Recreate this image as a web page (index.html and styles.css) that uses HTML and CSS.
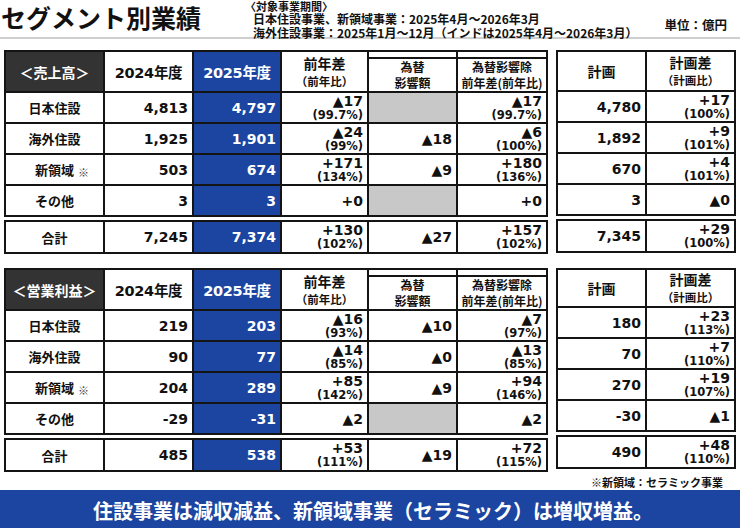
FILE: index.html
```html
<!DOCTYPE html>
<html lang="ja">
<head>
<meta charset="utf-8">
<title>セグメント別業績</title>
<link rel="stylesheet" href="styles.css">
</head>
<body>
<div class="page">
  <header class="top">
    <h1 class="title">セグメント別業績</h1>
    <div class="period">
      <div class="period-head">〈対象事業期間〉</div>
      <div class="period-line">日本住設事業、新領域事業：2025年4月～2026年3月</div>
      <div class="period-line">海外住設事業：2025年1月～12月（インドは2025年4月～2026年3月）</div>
    </div>
    <div class="unit">単位：億円</div>
  </header>

  <section class="block first">
    <div class="main">
      <table class="t">
        <colgroup><col class="c-lbl"><col class="c-89"><col class="c-88"><col class="c-87"><col class="c-89"><col class="c-90"></colgroup>
        <thead>
          <tr class="hrow">
            <th class="corner">＜売上高＞</th>
            <th class="yr">2024年度</th>
            <th class="yr cur">2025年度</th>
            <th class="hd"><span class="h1">前年差</span><span class="h2">（前年比）</span></th>
            <th class="hd fx"><span class="h3">為替</span><span class="h3">影響額</span></th>
            <th class="hd fx"><span class="h3">為替影響除</span><span class="h3">前年差(前年比)</span></th>
          </tr>
        </thead>
        <tbody>
          <tr><th class="lbl">日本住設</th><td>4,813</td><td class="cur">4,797</td><td><span class="v">▲17</span><span class="p">(99.7%)</span></td><td class="na"></td><td><span class="v">▲17</span><span class="p">(99.7%)</span></td></tr>
          <tr><th class="lbl">海外住設</th><td>1,925</td><td class="cur">1,901</td><td><span class="v">▲24</span><span class="p">(99%)</span></td><td>▲18</td><td><span class="v">▲6</span><span class="p">(100%)</span></td></tr>
          <tr><th class="lbl">新領域<span class="kome">※</span></th><td>503</td><td class="cur">674</td><td><span class="v">+171</span><span class="p">(134%)</span></td><td>▲9</td><td><span class="v">+180</span><span class="p">(136%)</span></td></tr>
          <tr><th class="lbl">その他</th><td>3</td><td class="cur">3</td><td>+0</td><td class="na"></td><td>+0</td></tr>
        </tbody>
      </table>
      <table class="t total">
        <colgroup><col class="c-lbl"><col class="c-89"><col class="c-88"><col class="c-87"><col class="c-89"><col class="c-90"></colgroup>
        <tbody>
          <tr><th class="lbl">合計</th><td>7,245</td><td class="cur">7,374</td><td><span class="v">+130</span><span class="p">(102%)</span></td><td>▲27</td><td><span class="v">+157</span><span class="p">(102%)</span></td></tr>
        </tbody>
      </table>
    </div>
    <div class="plan">
      <table class="t">
        <colgroup><col class="c-89"><col class="c-89"></colgroup>
        <thead>
          <tr class="hrow">
            <th class="hd"><span class="h1">計画</span></th>
            <th class="hd"><span class="h1">計画差</span><span class="h2">（計画比）</span></th>
          </tr>
        </thead>
        <tbody>
          <tr><td>4,780</td><td><span class="v">+17</span><span class="p">(100%)</span></td></tr>
          <tr><td>1,892</td><td><span class="v">+9</span><span class="p">(101%)</span></td></tr>
          <tr><td>670</td><td><span class="v">+4</span><span class="p">(101%)</span></td></tr>
          <tr><td>3</td><td>▲0</td></tr>
        </tbody>
      </table>
      <table class="t total">
        <colgroup><col class="c-89"><col class="c-89"></colgroup>
        <tbody>
          <tr><td>7,345</td><td><span class="v">+29</span><span class="p">(100%)</span></td></tr>
        </tbody>
      </table>
    </div>
  </section>

  <section class="block second">
    <div class="main">
      <table class="t">
        <colgroup><col class="c-lbl"><col class="c-89"><col class="c-88"><col class="c-87"><col class="c-89"><col class="c-90"></colgroup>
        <thead>
          <tr class="hrow">
            <th class="corner">＜営業利益＞</th>
            <th class="yr">2024年度</th>
            <th class="yr cur">2025年度</th>
            <th class="hd"><span class="h1">前年差</span><span class="h2">（前年比）</span></th>
            <th class="hd fx"><span class="h3">為替</span><span class="h3">影響額</span></th>
            <th class="hd fx"><span class="h3">為替影響除</span><span class="h3">前年差(前年比)</span></th>
          </tr>
        </thead>
        <tbody>
          <tr><th class="lbl">日本住設</th><td>219</td><td class="cur">203</td><td><span class="v">▲16</span><span class="p">(93%)</span></td><td>▲10</td><td><span class="v">▲7</span><span class="p">(97%)</span></td></tr>
          <tr><th class="lbl">海外住設</th><td>90</td><td class="cur">77</td><td><span class="v">▲14</span><span class="p">(85%)</span></td><td>▲0</td><td><span class="v">▲13</span><span class="p">(85%)</span></td></tr>
          <tr><th class="lbl">新領域<span class="kome">※</span></th><td>204</td><td class="cur">289</td><td><span class="v">+85</span><span class="p">(142%)</span></td><td>▲9</td><td><span class="v">+94</span><span class="p">(146%)</span></td></tr>
          <tr><th class="lbl">その他</th><td>-29</td><td class="cur">-31</td><td>▲2</td><td class="na"></td><td>▲2</td></tr>
        </tbody>
      </table>
      <table class="t total">
        <colgroup><col class="c-lbl"><col class="c-89"><col class="c-88"><col class="c-87"><col class="c-89"><col class="c-90"></colgroup>
        <tbody>
          <tr><th class="lbl">合計</th><td>485</td><td class="cur">538</td><td><span class="v">+53</span><span class="p">(111%)</span></td><td>▲19</td><td><span class="v">+72</span><span class="p">(115%)</span></td></tr>
        </tbody>
      </table>
    </div>
    <div class="plan">
      <table class="t">
        <colgroup><col class="c-89"><col class="c-89"></colgroup>
        <thead>
          <tr class="hrow">
            <th class="hd"><span class="h1">計画</span></th>
            <th class="hd"><span class="h1">計画差</span><span class="h2">（計画比）</span></th>
          </tr>
        </thead>
        <tbody>
          <tr><td>180</td><td><span class="v">+23</span><span class="p">(113%)</span></td></tr>
          <tr><td>70</td><td><span class="v">+7</span><span class="p">(110%)</span></td></tr>
          <tr><td>270</td><td><span class="v">+19</span><span class="p">(107%)</span></td></tr>
          <tr><td>-30</td><td>▲1</td></tr>
        </tbody>
      </table>
      <table class="t total">
        <colgroup><col class="c-89"><col class="c-89"></colgroup>
        <tbody>
          <tr><td>490</td><td><span class="v">+48</span><span class="p">(110%)</span></td></tr>
        </tbody>
      </table>
    </div>
  </section>

  <p class="note">※新領域：セラミック事業</p>
  <div class="banner">住設事業は減収減益、新領域事業（セラミック）は増収増益。</div>
</div>
</body>
</html>
```

FILE: styles.css
```css
* { box-sizing: border-box; }
html, body { margin: 0; padding: 0; background: #fff; }
body {
  width: 740px;
  height: 528px;
  overflow: hidden;
  font-family: "Noto Sans CJK JP", "Noto Sans", sans-serif;
  color: #111;
}
.page {
  display: flex;
  flex-direction: column;
  height: 528px;
}

/* ---------- top header ---------- */
.top {
  display: flex;
  align-items: flex-start;
  height: 39px;
  border-bottom: 2px solid #cfcfcf;
  padding-left: 1px;
}
.title {
  margin: 0;
  padding-top: 4px;
  font-size: 25px;
  line-height: 26px;
  font-weight: 700;
  color: #111;
  white-space: nowrap;
}
.period {
  margin-left: 44px;
  margin-top: 0;
  font-weight: 700;
  white-space: nowrap;
}
.period-head {
  font-size: 11px;
  line-height: 12px;
}
.period-line {
  font-size: 12px;
  line-height: 13.5px;
  padding-left: 8px;
}
.unit {
  margin-left: auto;
  margin-right: 13px;
  margin-top: 17px;
  font-size: 12.5px;
  line-height: 16px;
  font-weight: 700;
}

/* ---------- tables ---------- */
.block {
  display: flex;
  gap: 8px;
  padding-left: 4px;
}
.block.first { margin-top: 11px; }
.block.second { margin-top: 14px; }
.main, .plan {
  display: flex;
  flex-direction: column;
  gap: 3px;
}
.t {
  border-collapse: collapse;
  table-layout: fixed;
  font-family: "DejaVu Sans", "Noto Sans CJK JP", sans-serif;
  font-weight: 700;
  color: #111;
}
.main .t { width: 543px; }
.plan .t { width: 178px; }
.c-lbl { width: 99px; }
.c-89 { width: 89px; }
.c-88 { width: 88px; }
.c-87 { width: 87px; }
.c-90 { width: 90px; }

.t th, .t td {
  border: 2px solid #141414;
  padding: 0 4px 0 0;
  vertical-align: middle;
  white-space: nowrap;
}
.t tr { height: 31px; }
.first .hrow { height: 40px; }
.second .hrow { height: 38px; }
.t.total tr { height: 32px; }

.t td {
  text-align: right;
  font-size: 14px;
  line-height: 16px;
}
.t thead th {
  text-align: center;
  padding: 0;
  font-family: "Noto Sans CJK JP", sans-serif;
}
.corner {
  background: #333;
  color: #fff;
  font-size: 14px;
}
.yr {
  font-size: 14.5px;
  font-family: "DejaVu Sans", "Noto Sans CJK JP", sans-serif !important;
  letter-spacing: -0.3px;
}
.t .cur {
  background: #1b45a0;
  color: #fff;
}
.h1 { display: block; font-size: 14px; line-height: 18px; }
.h2 { display: block; font-size: 11.5px; line-height: 18px; }
.h3 { display: block; font-size: 12px; line-height: 16px; }
.t thead th.fx {
  padding-top: 7px;
  box-shadow: inset 0 5px 0 #fff, inset 0 7px 0 #141414;
}

.lbl {
  text-align: center;
  font-family: "Noto Sans CJK JP", sans-serif;
  font-size: 13px;
  font-weight: 700;
  padding: 0 !important;
}
.kome {
  font-size: 11px;
  color: #444;
  margin-left: 4px;
  margin-right: -15px;
  position: relative;
  top: 2px;
}

.v { display: block; font-size: 14px; line-height: 14px; }
.p { display: block; font-size: 11.5px; line-height: 14px; }
.t td.na { background: #c8c8c8; }

/* ---------- footer ---------- */
.note {
  margin: 2px 0 0 0;
  padding-right: 17px;
  text-align: right;
  font-size: 11px;
  line-height: 16px;
  font-weight: 700;
}
.banner {
  margin-top: auto;
  height: 41px;
  flex-shrink: 0;
  background: #1b45a0;
  color: #fff;
  font-size: 20px;
  font-weight: 700;
  display: flex;
  align-items: center;
  justify-content: center;
  padding-left: 6px;
}
```
